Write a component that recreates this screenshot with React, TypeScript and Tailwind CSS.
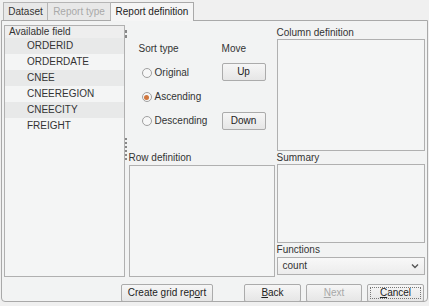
import React from "react";

const font = { fontFamily: '"Liberation Sans", Arial, sans-serif' };

function Radio({ label, checked }: { label: string; checked?: boolean }) {
  return (
    <div className="flex items-center h-[16px]">
      <span className="w-[10px] h-[10px] rounded-full border border-[#a0a0a0] bg-[#f7f7f7] flex items-center justify-center">
        {checked && <span className="w-[5px] h-[5px] rounded-full bg-[#d0773e]" />}
      </span>
      <span className="ml-[3px] text-[#333]">{label}</span>
    </div>
  );
}

function Btn({ children, w, disabled, focused }: { children: React.ReactNode; w: string; disabled?: boolean; focused?: boolean }) {
  return (
    <div
      className={`${w} h-[18px] rounded-[2px] border border-[#ababab] bg-gradient-to-b from-[#f6f6f6] to-[#e6e6e6] flex items-center justify-center ${disabled ? "text-[#a8a8a8]" : "text-[#222]"}`}
    >
      {focused ? (
        <span className="border border-dotted border-[#777] w-[calc(100%-4px)] h-[calc(100%-4px)] flex items-center justify-center">{children}</span>
      ) : (
        children
      )}
    </div>
  );
}

export default function App() {
  const fields = ["ORDERID", "ORDERDATE", "CNEE", "CNEEREGION", "CNEECITY", "FREIGHT"];
  return (
    <div className="w-[429px] h-[306px] bg-[#f0f0f0] text-[10px] leading-none text-[#333] overflow-hidden" style={font}>
      {/* Tabs */}
      <div className="flex h-[20px] items-end pl-[3px]">
        <div className="w-[45px] h-[18px] flex items-center justify-center border border-b-0 border-[#b5b5b5] bg-[#e8e8e8] text-[#333]">Dataset</div>
        <div className="w-[63px] h-[18px] flex items-center justify-center border border-b-0 border-l-0 border-[#b5b5b5] bg-[#e8e8e8] text-[#a9a9a9]">Report type</div>
        <div className="w-[83px] h-[19px] flex items-center justify-center border border-b-0 border-l-0 border-[#a9a9a9] bg-[#f5f5f5] text-[#222] relative top-[1px]">Report definition</div>
      </div>
      {/* Panel */}
      <div className="ml-[1px] w-[427px] h-[282px] border border-[#a9a9a9] rounded-b-[4px] bg-[#f2f3f3] flex flex-col pt-[4px] px-[2px]">
        <div className="flex h-[252px]">
          {/* Available field list */}
          <div className="w-[121px] h-[252px] border border-[#b0b0b0] bg-[#f4f5f5] flex flex-col">
            <div className="h-[12px] pl-[4px] flex items-center bg-[#eeeeee] text-[#333]">Available field</div>
            {fields.map((f, i) => (
              <div key={f} className={`h-[16px] pl-[22px] flex items-center ${i % 2 === 0 ? "bg-[#e8e9e9]" : "bg-[#f4f5f5]"} text-[#333]`}>
                {f}
              </div>
            ))}
          </div>
          {/* Splitter */}
          <div className="w-[3px] flex flex-col items-center">
            <div className="mt-[5px] w-[2px] h-[3px] bg-[#888]" />
            <div className="mt-[2px] w-[2px] h-[3px] bg-[#888]" />
            <div className="mt-[100px] flex flex-col gap-[2px]">
              {[0, 1, 2, 3, 4, 5].map((i) => (
                <div key={i} className="w-[2px] h-[2px] bg-[#888]" />
              ))}
            </div>
          </div>
          {/* Middle */}
          <div className="w-[147px] flex flex-col">
            <div className="h-[126px] flex pl-[11px] pt-[18px]">
              <div className="w-[83px] flex flex-col">
                <div className="h-[12px] flex items-center">Sort type</div>
                <div className="mt-[10px] pl-[3px] flex flex-col gap-[8px]">
                  <Radio label="Original" />
                  <Radio label="Ascending" checked />
                  <Radio label="Descending" />
                </div>
              </div>
              <div className="flex flex-col">
                <div className="h-[12px] flex items-center">Move</div>
                <div className="mt-[8px]">
                  <Btn w="w-[44px]">Up</Btn>
                </div>
                <div className="mt-[31px]">
                  <Btn w="w-[44px]">Down</Btn>
                </div>
              </div>
            </div>
            <div className="h-[14px] pl-[1px] flex items-center">Row definition</div>
            <div className="ml-[1px] w-[146px] flex-1 border border-[#b0b0b0] bg-[#f4f5f5]" />
          </div>
          {/* Right */}
          <div className="w-[149px] ml-[2px] flex flex-col">
            <div className="h-[14px] flex items-center pt-[1px]">Column definition</div>
            <div className="h-[112px] border border-[#b0b0b0] bg-[#f4f5f5]" />
            <div className="h-[13px] flex items-center">Summary</div>
            <div className="h-[79px] border border-[#b0b0b0] bg-[#f4f5f5]" />
            <div className="h-[14px] flex items-center">Functions</div>
            <div className="h-[18px] border border-[#b0b0b0] bg-gradient-to-b from-[#f8f8f8] to-[#ececec] flex items-center pl-[5px] pr-[5px] justify-between">
              <span className="text-[#333]">count</span>
              <svg width="8" height="6" viewBox="0 0 8 6">
                <path d="M1 1.5 L4 4.5 L7 1.5" fill="none" stroke="#555" strokeWidth="1.4" />
              </svg>
            </div>
          </div>
        </div>
        {/* Bottom buttons */}
        <div className="flex mt-[7px]">
          <div className="ml-[117px]">
            <Btn w="w-[92px]">Create grid rep<span className="underline">o</span>rt</Btn>
          </div>
          <div className="ml-[31px]">
            <Btn w="w-[57px]"><span className="underline">B</span>ack</Btn>
          </div>
          <div className="ml-[5px]">
            <Btn w="w-[56px]" disabled><span className="underline">N</span>ext</Btn>
          </div>
          <div className="ml-[5px]">
            <Btn w="w-[57px]" focused><span className="underline">C</span>ancel</Btn>
          </div>
        </div>
      </div>
    </div>
  );
}
